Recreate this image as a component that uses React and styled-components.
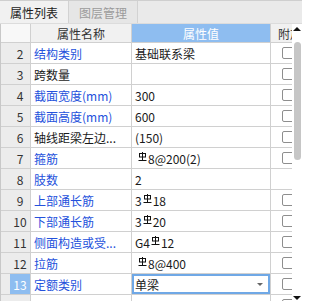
import React from 'react';
import styled, { createGlobalStyle } from 'styled-components';

const GlobalStyle = createGlobalStyle`
  html, body {
    margin: 0;
    padding: 0;
    background: #ffffff;
  }
  body {
    font-family: "Noto Sans CJK SC", "Microsoft YaHei", sans-serif;
    font-size: 12px;
    color: #222;
  }
`;

const Panel = styled.div`
  width: 302px;
  height: 301px;
  overflow: hidden;
  display: flex;
  flex-direction: column;
  background: #fff;
`;

const TabBar = styled.div`
  height: 24px;
  flex: none;
  display: flex;
  box-sizing: border-box;
  background: #eaeaea;
  border-top: 1px solid #cfcfcf;
  border-bottom: 1px solid #dcdcdc;
`;

const Tab = styled.div`
  width: 69px;
  display: flex;
  align-items: center;
  justify-content: center;
  box-sizing: border-box;
  border-right: 1px solid #d2d2d2;
  background: ${(p) => (p.active ? '#f1f1f1' : '#e6e6e6')};
  color: ${(p) => (p.active ? '#1c1c1c' : '#9b9b9b')};
  font-size: 12px;
`;

const Body = styled.div`
  flex: 1;
  display: flex;
  min-height: 0;
`;

const Table = styled.div`
  flex: 1;
  overflow: hidden;
  display: flex;
  flex-direction: column;
  border-left: 1px solid #c8c8c8;
`;

const Row = styled.div`
  flex: none;
  display: grid;
  grid-template-columns: 30px 101px 139px 60px;
  height: ${(p) => (p.header ? '19px' : '21px')};
  box-sizing: border-box;
  border-bottom: 1px solid #d0d0d0;
`;

const Cell = styled.div`
  display: flex;
  align-items: center;
  box-sizing: border-box;
  border-right: 1px solid #d0d0d0;
  white-space: nowrap;
  overflow: hidden;
  position: relative;
`;

const HeadCell = styled(Cell)`
  justify-content: ${(p) => (p.left ? 'flex-start' : 'center')};
  padding-left: ${(p) => (p.left ? '7px' : '0')};
  background: ${(p) => (p.accent ? '#8ebdf0' : p.blank ? '#f8f8f8' : '#f1f1f1')};
  color: ${(p) => (p.accent ? '#ffffff' : '#333')};
`;

const NumCell = styled(Cell)`
  background: #ececec;
  padding-left: 9px;
  align-items: stretch;
`;

const NumBox = styled.div`
  flex: 1;
  display: flex;
  align-items: center;
  justify-content: center;
  background: ${(p) => (p.active ? '#8ebdf0' : 'transparent')};
  color: ${(p) => (p.active ? '#ffffff' : '#333')};
  font-size: 12px;
`;

const NameCell = styled(Cell)`
  padding-left: 3px;
  color: ${(p) => (p.blue ? '#2451dc' : '#1a1a1a')};
`;

const ValueCell = styled(Cell)`
  padding-left: ${(p) => (p.indent ? '5px' : '3px')};
  color: #1a1a1a;
  box-shadow: ${(p) => (p.selected ? 'inset 0 0 0 2px #6fa8e6' : 'none')};
`;

const DropArrow = styled.span`
  position: absolute;
  right: 7px;
  top: 9px;
  width: 0;
  height: 0;
  border-left: 3px solid transparent;
  border-right: 3px solid transparent;
  border-top: 3px solid #666;
`;

const AttachCell = styled(Cell)`
  padding-left: 11px;
`;

const CheckBox = styled.span`
  flex: none;
  width: 14px;
  height: 12px;
  box-sizing: border-box;
  border: 1px solid #8e8e8e;
  border-radius: 2px;
  background: #fff;
`;

const Scrollbar = styled.div`
  width: 10px;
  flex: none;
  display: flex;
  flex-direction: column;
  align-items: center;
  background: #fff;
`;

const Arrow = styled.span`
  flex: none;
  width: 0;
  height: 0;
  margin: ${(p) => (p.down ? '0 0 1px' : '3px 0 0')};
  border-left: 4px solid transparent;
  border-right: 4px solid transparent;
  ${(p) => (p.down ? 'border-top: 4px solid #111;' : 'border-bottom: 4px solid #111;')}
`;

const Track = styled.div`
  flex: 1;
  width: 100%;
  display: flex;
  justify-content: center;
  padding-top: 11px;
`;

const Thumb = styled.div`
  width: 7px;
  height: 118px;
  border-radius: 4px;
  background: #c6c6c6;
`;

const Sym = styled.svg`
  width: 9px;
  height: 9px;
  margin: 0 1px 3px;
  flex: none;
`;

const RebarMark = () => (
  <Sym viewBox="0 0 9 9">
    <g fill="none" stroke="#111" strokeWidth="1">
      <rect x="1.5" y="1.5" width="6" height="3.5" />
      <path d="M4.5 0 V8 M0.5 8.5 H8.5" />
    </g>
  </Sym>
);

// '#' marks where the grade-III rebar symbol goes
const renderValue = (value) =>
  value.split('#').map((part, i) => (
    <React.Fragment key={i}>
      {i > 0 && <RebarMark />}
      {part}
    </React.Fragment>
  ));

const rows = [
  { no: 2, name: '结构类别', value: '基础联系梁', blue: true, check: true },
  { no: 3, name: '跨数量', value: '', check: true },
  { no: 4, name: '截面宽度(mm)', value: '300', blue: true, check: true },
  { no: 5, name: '截面高度(mm)', value: '600', blue: true, check: true },
  { no: 6, name: '轴线距梁左边...', value: '(150)', check: true },
  { no: 7, name: '箍筋', value: '#8@200(2)', indent: true, blue: true, check: true },
  { no: 8, name: '肢数', value: '2', blue: true },
  { no: 9, name: '上部通长筋', value: '3#18', blue: true, check: true },
  { no: 10, name: '下部通长筋', value: '3#20', blue: true, check: true },
  { no: 11, name: '侧面构造或受...', value: 'G4#12', blue: true, check: true },
  { no: 12, name: '拉筋', value: '#8@400', indent: true, blue: true, check: true },
  { no: 13, name: '定额类别', value: '单梁', blue: true, check: true, selected: true },
  { no: '', name: '', value: '', check: true },
];

const App = () => (
  <Panel>
    <GlobalStyle />
    <TabBar>
      <Tab active>属性列表</Tab>
      <Tab>图层管理</Tab>
    </TabBar>
    <Body>
      <Table>
        <Row header>
          <HeadCell blank />
          <HeadCell>属性名称</HeadCell>
          <HeadCell accent>属性值</HeadCell>
          <HeadCell left>附加</HeadCell>
        </Row>
        {rows.map((r, i) => (
          <Row key={i}>
            <NumCell>
              <NumBox active={r.selected}>{r.no}</NumBox>
            </NumCell>
            <NameCell blue={r.blue}>{r.name}</NameCell>
            <ValueCell selected={r.selected} indent={r.indent}>
              {renderValue(r.value)}
              {r.selected && <DropArrow />}
            </ValueCell>
            <AttachCell>{r.check && <CheckBox />}</AttachCell>
          </Row>
        ))}
      </Table>
      <Scrollbar>
        <Arrow />
        <Track>
          <Thumb />
        </Track>
        <Arrow down />
      </Scrollbar>
    </Body>
  </Panel>
);

export default App;
